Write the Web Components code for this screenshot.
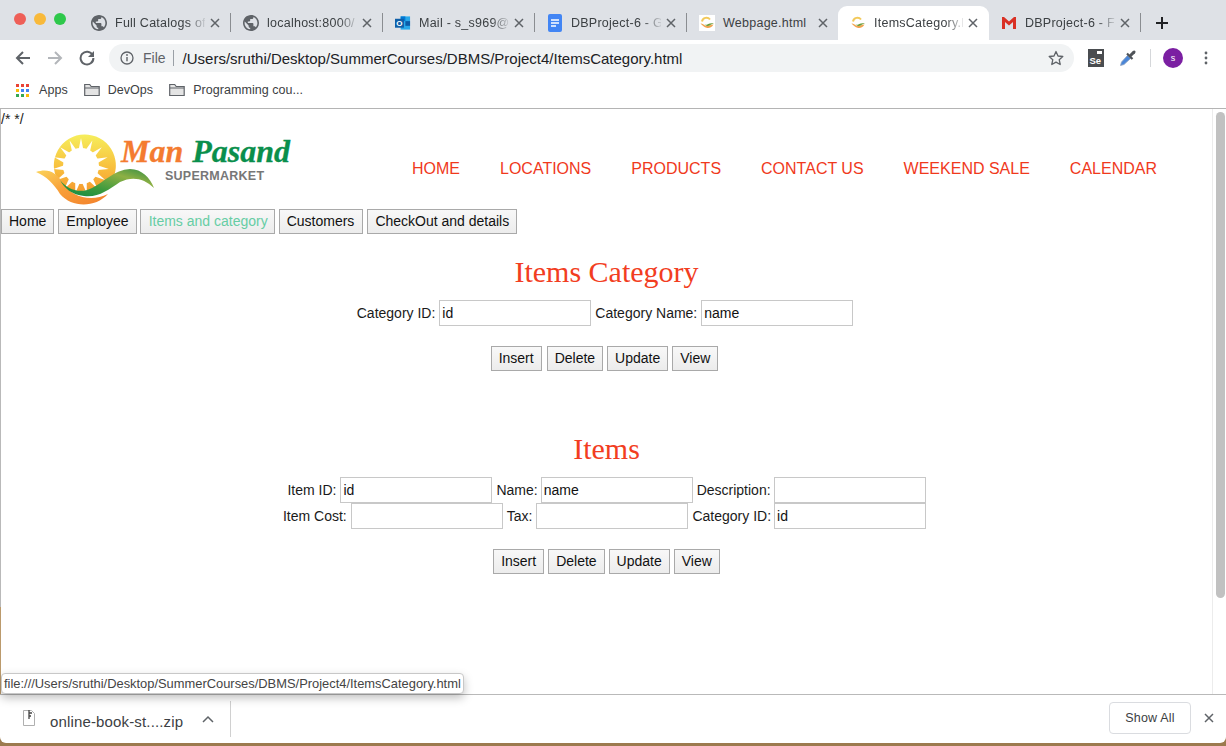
<!DOCTYPE html>
<html lang="en"><head><meta charset="utf-8"><title>ItemsCategory</title>
<style>
html,body{margin:0;padding:0;height:746px;overflow:hidden;background:#9c7a4e;font-family:"Liberation Sans",Arial,sans-serif}
body{display:flex;flex-direction:column;width:1226px}
</style></head><body>
<browser-tabs></browser-tabs>
<browser-toolbar></browser-toolbar>
<browser-bookmarks></browser-bookmarks>
<page-view>
  <site-header></site-header>
  <page-menu></page-menu>
  <form-section heading="Items Category" top="18" gap="20" btnpad="4" first="5"
    rows='[{"pad":3,"f":[["Category ID:","id",4],["Category Name:","name",4]]}]'></form-section>
  <form-section heading="Items" top="58" gap="20" btnpad="0" first="4"
    rows='[{"pad":0,"f":[["Item ID:","id",4],["Name:","name",3],["Description:","",3]]},{"pad":4,"f":[["Item Cost:","",4],["Tax:","",4],["Category ID:","id",3]]}]'></form-section>
</page-view>
<download-bar></download-bar>
<script>
function def(name,html){
  customElements.define(name,class extends HTMLElement{
    constructor(){super();this.attachShadow({mode:'open'});}
    connectedCallback(){this.shadowRoot.innerHTML=typeof html==='function'?html(this):html;}
  });
}
const X=(c='#5f6368')=>`<svg width="10" height="10" viewBox="0 0 10 10"><path d="M1 1l8 8M9 1l-8 8" stroke="${c}" stroke-width="1.5" fill="none"/></svg>`;
const globe=`<svg width="16" height="16" viewBox="2 2 20 20"><path fill="#5f6368" d="M12 2C6.48 2 2 6.48 2 12s4.48 10 10 10 10-4.48 10-10S17.52 2 12 2zm-1 17.93c-3.95-.49-7-3.85-7-7.93 0-.62.08-1.21.21-1.79L9 15v1c0 1.1.9 2 2 2v1.93zm6.9-2.54c-.26-.81-1-1.39-1.9-1.39h-1v-3c0-.55-.45-1-1-1H8v-2h2c.55 0 1-.45 1-1V7h2c1.1 0 2-.9 2-2v-.41c2.93 1.19 5 4.06 5 7.41 0 2.08-.8 3.97-2.1 5.39z"/></svg>`;
const outlook=`<svg width="17" height="16" viewBox="0 0 17 16"><path d="M6 1h10v14H6z" fill="#28a8ea"/><path d="M6 1h5v5H6z" fill="#0078d4"/><path d="M11 6h5v5h-5z" fill="#0a5ca8"/><path d="M0 3.5h9.5V13H0z" fill="#0f5fa8"/><text x="4.7" y="11" font-family="Liberation Sans" font-weight="700" font-size="8.5" text-anchor="middle" fill="#fff">O</text></svg>`;
const docs=`<svg width="16" height="18" viewBox="0 0 16 18"><rect x="1" y="0" width="14" height="18" rx="2" fill="#4285f4"/><path d="M4 6h8M4 9h8M4 12h5" stroke="#fff" stroke-width="1.5"/></svg>`;
const mini=`<svg width="16" height="16" viewBox="0 0 16 16"><rect width="16" height="16" fill="#fff"/><path d="M11 4.5A4.500 4.500 0 0 0 3 6.500" stroke="#f2c95a" stroke-width="2" fill="none"/><path d="M1.500 8.500c3-.5 4 3 7 2.500 2-.3 3-1.200 6-1.500-2 3.500-5 3.800-7 3.300s-4-2.300-6-4.300z" fill="#f2a24e"/><path d="M5 9.500c3 1.500 5-2.500 10-1-3 .3-4 2.800-7 2.500z" fill="#6a9c3a"/></svg>`;
const gmail=`<svg width="16" height="14" viewBox="0 0 16 14"><path d="M1 1v12h3V6l4 3.500L12 6v7h3V1h-2L8 5.500 3 1z" fill="#d93025"/></svg>`;
const tabs=[[globe,'Full Catalogs of','sep'],[globe,'localhost:8000/','sep'],[outlook,'Mail - s_s969@','sep'],[docs,'DBProject-6 - G','sep'],[mini,'Webpage.html','nofade'],[mini,'ItemsCategory.h','active'],[gmail,'DBProject-6 - F','sep']];
def('browser-tabs',()=>`<style>
:host{display:flex;height:40px;background:#dee1e6;flex:none;font:12.5px "Liberation Sans",Arial,sans-serif;color:#3c4043;align-items:stretch}
.lights{width:79px;display:flex;gap:8px;padding:13px 0 0 14px;box-sizing:border-box}
.lights i{width:12px;height:12px;border-radius:50%}
.tab{width:152px;box-sizing:border-box;display:flex;align-items:center;padding:5px 10px 0 12px;gap:8px;position:relative}
.fav{width:16px;height:18px;display:flex;align-items:center;justify-content:center;flex:none}
.t{flex:1;white-space:nowrap;letter-spacing:.25px;min-width:0;-webkit-mask-image:linear-gradient(90deg,#000 80%,rgba(0,0,0,.12) 100%);mask-image:linear-gradient(90deg,#000 80%,rgba(0,0,0,.12) 100%)}
.nofade .t{-webkit-mask-image:none;mask-image:none}
.x{width:10px;height:10px;display:flex;flex:none;margin:0 1px 0 -3px}
.sep::after{content:"";position:absolute;right:0;top:13px;height:19px;width:1px;background:#8a8d91}
.active{background:#fff;border-radius:9px 9px 0 0;margin-top:6px;height:34px;padding:0 10px 0 12px;margin-left:-1px;width:151px}
.plus{width:42px;display:flex;align-items:center;justify-content:center;padding-top:5px;box-sizing:border-box}
</style>
<div class="lights"><i style="background:#ee5f58"></i><i style="background:#f8b93a"></i><i style="background:#2ec84b"></i></div>
${tabs.map(t=>`<div class="tab ${t[2]}"><span class="fav">${t[0]}</span><span class="t">${t[1]}</span><span class="x">${X()}</span></div>`).join('')}
<div class="plus"><svg width="12" height="12" viewBox="0 0 12 12"><path d="M6 0v12M0 6h12" stroke="#202124" stroke-width="2"/></svg></div>`);
def('browser-toolbar',()=>`<style>
:host{display:flex;height:34px;background:#fff;flex:none;align-items:center;box-sizing:border-box;padding:2px 0 0 15px;font-family:"Liberation Sans",Arial,sans-serif}
.nav{display:flex;gap:16px;align-items:center;margin-right:14px}
.nav svg{display:block}
.omni{width:965px;height:28px;background:#f1f3f4;border-radius:14px;display:flex;align-items:center;box-sizing:border-box;padding:0 10px 0 11px;flex:none}
.file{font-size:14px;color:#5f6368;margin:0 7px 0 9px}
.bar{width:1px;height:16px;background:#9aa0a6;margin-right:9px}
.url{font-size:15px;color:#202124;flex:1;white-space:nowrap}
.ext{display:flex;align-items:center;margin-left:14px}
.ext .s{width:1px;height:18px;background:#d5d7da;margin:0 12px 0 13px}
.av{width:20px;height:20px;border-radius:50%;background:#7b1fa2;color:#fff;font-size:9px;display:flex;align-items:center;justify-content:center}
</style>
<div class="nav">
<svg width="16" height="16" viewBox="0 0 16 16"><path d="M15 8H2M8 2L2 8l6 6" stroke="#5f6368" stroke-width="2" fill="none"/></svg>
<svg width="16" height="16" viewBox="0 0 16 16"><path d="M1 8h13M8 2l6 6-6 6" stroke="#b3b6ba" stroke-width="2" fill="none"/></svg>
<svg width="16" height="16" viewBox="0 0 16 16"><path d="M13.6 5A6.400 6.400 0 1 0 14.400 8" stroke="#5f6368" stroke-width="2" fill="none"/><path d="M15 1v6H9z" fill="#5f6368"/></svg>
</div>
<div class="omni">
<svg width="14" height="14" viewBox="0 0 14 14"><circle cx="7" cy="7" r="6" stroke="#5f6368" stroke-width="1.3" fill="none"/><path d="M7 6v4.200" stroke="#5f6368" stroke-width="1.4"/><circle cx="7" cy="4" r=".9" fill="#5f6368"/></svg>
<span class="file">File</span><span class="bar"></span><span class="url">/Users/sruthi/Desktop/SummerCourses/DBMS/Project4/ItemsCategory.html</span>
<svg width="16" height="16" viewBox="0 0 16 16"><path d="M8 1.500l2 4.500 4.800.5-3.600 3.200 1 4.800L8 12.100l-4.200 2.400 1-4.800L1.200 6.500 6 6z" stroke="#5f6368" stroke-width="1.3" fill="none" stroke-linejoin="round"/></svg>
</div>
<div class="ext">
<svg width="16" height="18" viewBox="0 0 16 18"><rect width="16" height="18" fill="#4a4d50"/><rect x="9" y="2" width="5" height="3" fill="#fff"/><text x="1.5" y="15" font-family="Liberation Sans" font-weight="700" font-size="9.5" fill="#fff">Se</text></svg>
<svg width="18" height="18" viewBox="0 0 18 18" style="margin-left:15px"><path d="M1.500 16.500l1-3.500 6-6.500 3 3-6.500 6z" fill="#4a86d8" stroke="#8fa3c0" stroke-width=".8"/><path d="M8 4.500l5.500 5.500" stroke="#4f5358" stroke-width="2.200"/><path d="M10 6l3.800-4c1.800-1.500 3.700.4 2.200 2.200L12 8z" fill="#4f5358"/></svg>
<span class="s"></span><span class="av">s</span>
<svg width="4" height="14" viewBox="0 0 4 14" style="margin-left:21px"><circle cx="2" cy="2" r="1.4" fill="#5f6368"/><circle cx="2" cy="7" r="1.4" fill="#5f6368"/><circle cx="2" cy="12" r="1.4" fill="#5f6368"/></svg>
</div>`);
const folder=`<svg width="16" height="14" viewBox="0 0 16 14"><path d="M.7 12.500V1.500h5l1.500 2h8v9z" fill="#e4e4e4" stroke="#5f6368" stroke-width="1.2"/><path d="M1 5h14" stroke="#5f6368" stroke-width="1"/></svg>`;
const dots=['#ea4335','#ea4335','#ea4335','#fbbc05','#4285f4','#4285f4','#34a853','#34a853','#fbbc05'];
def('browser-bookmarks',()=>`<style>
:host{display:flex;height:35px;background:#fff;border-bottom:1px solid #b4b4b4;box-sizing:border-box;flex:none;align-items:center;padding:0 0 2px 16px;font:12.5px "Liberation Sans",Arial,sans-serif;color:#3c4043}
.g{display:grid;grid-template-columns:repeat(3,3px);gap:2px;margin-right:10px;width:13px}
.g i{width:3px;height:3px;display:block}
.b{display:flex;align-items:center;gap:8px;margin-right:16px;letter-spacing:.05px}
</style>
<div class="g">${dots.map(c=>`<i style="background:${c}"></i>`).join('')}</div>
<span class="b">Apps</span><span class="b">${folder}DevOps</span><span class="b">${folder}Programming cou...</span>`);
def('page-view',`<style>
:host{display:flex;flex:1;min-height:0;background:#fff;position:relative;box-sizing:border-box;border-left:1px solid #b9b9b9;border-image:linear-gradient(#b9b9b9 85%,#bb9a6c 85%) 1}
.main{width:1211px;flex:none;height:100%;overflow:hidden;font:14px "Liberation Sans",Arial,sans-serif;color:#000}
.note{font-size:14px;line-height:16px;height:20px;padding-top:2px;box-sizing:border-box;color:#222}
.sb{width:14px;background:#fff;border-left:1px solid #ececec;box-sizing:border-box;padding:3px 1px 0 3px;flex:none}
.sb i{display:block;height:486px;background:#c1c1c1;border-radius:5px}
.tip{position:absolute;left:0;top:564px;height:21px;box-sizing:border-box;padding:0 2px;background:#fff;border:1px solid #c8c8c8;border-radius:4px;font-size:12.9px;line-height:20px;color:#444;white-space:nowrap;box-shadow:0 4px 10px rgba(0,0,0,.25)}
</style><div class="main"><div class="note">/* */</div><slot></slot></div><div class="sb"><i></i></div><div class="tip">file:///Users/sruthi/Desktop/SummerCourses/DBMS/Project4/ItemsCategory.html</div>`);
function rays(){
  let s='';const n=15,cx=81,cy=166,w=.13;
  for(let i=0;i<n;i++){
    const a=(i/n)*Math.PI*2-Math.PI/2;
    const pt=(r,t)=>(cx+r*Math.cos(t)).toFixed(1)+','+(cy+r*Math.sin(t)).toFixed(1);
    s+=`<polygon points="${pt(28,a)} ${pt(15,a-w*1.4)} ${pt(15,a+w*1.4)}" fill="#fff"/>`;
  }
  return s+`<circle cx="${cx}" cy="${cy}" r="18" fill="#fff"/>`;
}
def('site-header',()=>`<style>
:host{display:flex;height:80px;box-sizing:border-box;align-items:flex-start}
.logo{display:flex;width:256px;height:74px;margin:4px 0 0 35px;flex:none}
.logo svg{display:block;flex:none}
.txt{margin-left:-35px}
.mp{margin-top:2px;font:italic 700 32px/32px "Liberation Serif",serif;white-space:nowrap;-webkit-text-stroke:.3px currentColor}
.mp b{color:#f47b30;font-weight:700}.mp u{color:#0a8f4c;text-decoration:none;margin-left:9px}
.sm{margin:1px 0 0 44px;font:700 12.5px/16px "Liberation Sans",Arial,sans-serif;color:#777;letter-spacing:.25px;white-space:nowrap}
nav{display:flex;gap:40px;margin-left:120px;padding-top:30px;font-size:16px;line-height:20px;color:#f0391c;white-space:nowrap}
</style>
<div class="logo">
<svg width="120" height="74" viewBox="36 133 120 74">
<defs><linearGradient id="s" x1="0" y1="0" x2="0" y2="1"><stop offset="0" stop-color="#f6ee5c"/><stop offset=".6" stop-color="#f8bd3c"/><stop offset="1" stop-color="#f59a30"/></linearGradient>
<linearGradient id="g" x1="0" y1="1" x2="1" y2="0"><stop offset="0" stop-color="#0c8a45"/><stop offset=".35" stop-color="#3d9a3e"/><stop offset=".7" stop-color="#8eb044"/><stop offset="1" stop-color="#2c8a44"/></linearGradient>
<linearGradient id="o" x1="0" y1="0" x2="1" y2="1"><stop offset="0" stop-color="#fbd35a"/><stop offset=".45" stop-color="#f8a03a"/><stop offset="1" stop-color="#f27f2c"/></linearGradient></defs>
<path d="M60 184A31 31 0 1 1 114 176L92 190 72 192z" fill="url(#s)"/>
${rays()}
<path d="M36 172C48 168 56 172 63 183 71 196 90 203 108 194 95 208 72 208 60 194 54 184 46 176 36 172z" fill="url(#o)"/>
<path d="M60 180C68 190 80 194 92 188 104 182 114 170 130 169 142 169 150 178 154 188 144 178 132 176 120 182 108 190 98 198 84 196 72 195 64 188 60 180z" fill="url(#g)"/>
</svg>
<div class="txt"><div class="mp"><b>Man</b><u>Pasand</u></div><div class="sm">SUPERMARKET</div></div>
</div>
<nav><span>HOME</span><span>LOCATIONS</span><span>PRODUCTS</span><span>CONTACT US</span><span>WEEKEND SALE</span><span>CALENDAR</span></nav>`);
def('tab-btn',h=>`<style>
:host{display:inline-block;box-sizing:border-box;height:25px;padding:0 7px;border:1px solid #a9a9a9;background:linear-gradient(#f8f8f8,#ececec);font:14px/23px "Liberation Sans",Arial,sans-serif;color:${h.hasAttribute('on')?'#66cda4':'#111'};white-space:nowrap}
</style><slot></slot>`);
def('page-menu',`<style>:host{display:flex;gap:4px;height:25px}</style>
<tab-btn>Home</tab-btn><tab-btn>Employee</tab-btn><tab-btn on style="margin-left:-1px;padding:0 6px 0 8px">Items and category</tab-btn><tab-btn style="padding-right:8px">Customers</tab-btn><tab-btn>CheckOut and details</tab-btn>`);
def('form-section',h=>{
 const rows=JSON.parse(h.getAttribute('rows'));
 return `<style>
 :host{display:block;text-align:center;margin-top:${h.getAttribute('top')}px}
 h2{margin:0 0 8px;font:400 30px/40px "Liberation Serif","Times New Roman",serif;color:#f23d21}
 .r{display:flex;justify-content:center;align-items:center;height:26px;box-sizing:border-box}
 .f{display:flex;align-items:center;margin:0 2px}
 .f label{color:#1a1a1a}
 .i{box-sizing:border-box;width:152px;height:26px;border:1px solid #c8c8c8;text-align:left;padding:0 2px;line-height:24px;color:#111;background:#fff}
 .btns{display:flex;justify-content:center;gap:4px;margin-top:${h.getAttribute('gap')}px;padding-right:${h.getAttribute('btnpad')}px}
 .btns span{box-sizing:border-box;height:25px;padding:0 7px;border:1px solid #a9a9a9;background:linear-gradient(#f8f8f8,#ececec);line-height:23px;color:#111}
 .btns span:first-child{margin-right:${h.getAttribute('first')-4}px}
 </style><h2>${h.getAttribute('heading')}</h2>
 ${rows.map(r=>`<div class="r" style="padding-right:${r.pad}px">${r.f.map(f=>`<div class="f"><label style="margin-right:${f[2]}px">${f[0]}</label><div class="i">${f[1]}</div></div>`).join('')}</div>`).join('')}
 <div class="btns"><span>Insert</span><span>Delete</span><span>Update</span><span>View</span></div>`;
});
def('download-bar',()=>`<style>
:host{display:flex;height:49px;flex:none;background:#fff;border-top:1px solid #b9b9b9;border-radius:0 0 6px 6px;box-sizing:border-box;align-items:center;font:13px "Liberation Sans",Arial,sans-serif;color:#3c4043;padding-left:23px;margin-bottom:3px}
.c{width:12px;height:16px;margin-top:-2px}
.n{margin:4px 0 0 15px;font-size:15px;letter-spacing:.15px;white-space:nowrap}
.up{margin-left:19px;margin-top:-1px}
.s{width:1px;height:36px;background:#d0d0d0;margin-left:16px}
.btn{margin:-3px 0 0 auto;width:82px;height:32px;box-sizing:border-box;border:1px solid #dadce0;border-radius:4px;display:flex;align-items:center;justify-content:center;font-size:12.5px;letter-spacing:.2px}
.x{margin:-2px 12px 0 13px;display:flex}
</style>
<svg class="c" viewBox="0 0 12 16"><path d="M.5.500h8l3 3v12H.5z" fill="#fff" stroke="#b0b0b0"/><path d="M6 0v9M6 3h3M6 6h2" stroke="#444" stroke-width="1.3"/></svg>
<span class="n">online-book-st....zip</span>
<svg class="up" width="12" height="8" viewBox="0 0 12 8"><path d="M1 7l5-5 5 5" stroke="#5f6368" stroke-width="1.5" fill="none"/></svg>
<span class="s"></span><span class="btn">Show All</span><span class="x">${X()}</span>`);
</script>
</body></html>
